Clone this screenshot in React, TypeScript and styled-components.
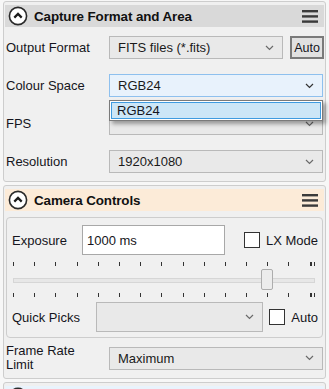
import styled, { createGlobalStyle } from 'styled-components';

const GlobalStyle = createGlobalStyle`
  html, body {
    margin: 0;
    padding: 0;
    background: #f7f7f7;
  }
  body {
    font-family: 'Liberation Sans', Arial, sans-serif;
    font-size: 13px;
    color: #151520;
  }
`;

const headerColors = {
  gray: '#d9d9d9',
  orange: '#fcebd8',
  blue: '#e9f3fc',
};

function CollapseIcon() {
  return (
    <svg width="20" height="20" viewBox="0 0 20 20">
      <circle cx="10" cy="10" r="8.6" fill="#fff" stroke="#2a2a2a" strokeWidth="1.6" />
      <path d="M6.3 11.6 L10 7.9 L13.7 11.6" fill="none" stroke="#1a1a1a" strokeWidth="2.2" />
    </svg>
  );
}

function MenuIcon() {
  return (
    <svg width="16" height="13" viewBox="0 0 16 13">
      <rect x="0" y="0" width="16" height="2.4" fill="#3a3a3a" />
      <rect x="0" y="5.2" width="16" height="2.4" fill="#3a3a3a" />
      <rect x="0" y="10.4" width="16" height="2.4" fill="#3a3a3a" />
    </svg>
  );
}

function Chevron() {
  return (
    <svg width="9" height="6" viewBox="0 0 9 6">
      <path d="M1 1 L4.5 4.5 L8 1" fill="none" stroke="#6a6a6a" strokeWidth="1.2" />
    </svg>
  );
}

function Combo({ value, width, height = 23, focused }: { value?: string; width: number; height?: number; focused?: boolean }) {
  return (
    <ComboBox $width={width} $height={height} $focused={focused}>
      <ComboText>{value}</ComboText>
      <Chevron />
    </ComboBox>
  );
}

const ticks = Array.from({ length: 15 }, (_, i) => i);

export default function App() {
  return (
    <>
      <GlobalStyle />
      <Page>
        <Panel>
          <Header $bg={headerColors.gray}>
            <CollapseIcon />
            <HeaderTitle>Capture Format and Area</HeaderTitle>
            <MenuIcon />
          </Header>
          <Rows>
            <Row>
              <Label>Output Format</Label>
              <Combo value="FITS files (*.fits)" width={174} />
              <AutoButton>Auto</AutoButton>
            </Row>
            <Row>
              <Label>Colour Space</Label>
              <DropWrap>
                <Combo value="RGB24" width={214} focused />
                <DropList>
                  <DropItem>RGB24</DropItem>
                </DropList>
              </DropWrap>
            </Row>
            <Row>
              <Label>FPS</Label>
              <Combo width={214} />
            </Row>
            <Row>
              <Label>Resolution</Label>
              <Combo value="1920x1080" width={214} />
            </Row>
          </Rows>
        </Panel>

        <Panel>
          <Header $bg={headerColors.orange}>
            <CollapseIcon />
            <HeaderTitle>Camera Controls</HeaderTitle>
            <MenuIcon />
          </Header>
          <GroupBox>
            <ExposureRow>
              <SmallLabel>Exposure</SmallLabel>
              <TextInput>1000 ms</TextInput>
              <CheckLabel>
                <CheckBox />
                LX Mode
              </CheckLabel>
            </ExposureRow>
            <Slider>
              <TickRow>
                {ticks.map(i => (
                  <Tick key={i} />
                ))}
                <DoubleTick />
              </TickRow>
              <TrackArea>
                <Track />
                <Thumb />
              </TrackArea>
              <TickRow>
                {ticks.map(i => (
                  <Tick key={i} />
                ))}
                <DoubleTick />
              </TickRow>
            </Slider>
            <QuickRow>
              <SmallLabel>Quick Picks</SmallLabel>
              <Combo width={167} height={30} />
              <CheckLabel>
                <CheckBox />
                Auto
              </CheckLabel>
            </QuickRow>
          </GroupBox>
          <FrameRow>
            <Label>
              Frame Rate
              <br />
              Limit
            </Label>
            <Combo value="Maximum" width={214} />
          </FrameRow>
        </Panel>

        <Panel>
          <Header $bg={headerColors.blue}>
            <CollapseIcon />
          </Header>
        </Panel>
      </Page>
    </>
  );
}

const Page = styled.div`
  width: 329px;
  height: 389px;
  overflow: hidden;
  padding: 1px 3px 0 3px;
  box-sizing: border-box;
  display: flex;
  flex-direction: column;
  gap: 3px;
`;

const Panel = styled.div`
  flex-shrink: 0;
  background: #f0f0f0;
  border: 1px solid #cdcdcd;
  border-radius: 3px;
  padding: 3px 1px 2px 1px;
`;

const Header = styled.div<{ $bg: string }>`
  height: 22px;
  background: ${({ $bg }) => $bg};
  display: flex;
  align-items: center;
  padding: 0 6px 0 3px;
  gap: 6px;
`;

const HeaderTitle = styled.div`
  flex: 1;
  font-weight: 700;
  font-size: 13.4px;
  letter-spacing: -0.1px;
  color: #111;
`;

const Rows = styled.div`
  display: flex;
  flex-direction: column;
  gap: 15px;
  padding: 9px 0 6px 1px;
`;

const Row = styled.div`
  display: flex;
  align-items: center;
  height: 23px;
`;

const Label = styled.div`
  width: 103px;
  flex-shrink: 0;
  line-height: 14px;
`;

const ComboBox = styled.div<{ $width: number; $height: number; $focused?: boolean }>`
  width: ${({ $width }) => $width}px;
  height: ${({ $height }) => $height}px;
  box-sizing: border-box;
  border: 1px solid ${({ $focused }) => ($focused ? '#8ec0ee' : '#b9b9b9')};
  background: ${({ $focused }) => ($focused ? '#e8f2fc' : '#e9e9e9')};
  display: flex;
  align-items: center;
  padding: 0 8px 0 8px;
  flex-shrink: 0;
  & svg path {
    stroke: ${({ $focused }) => ($focused ? '#333' : '#6a6a6a')};
  }
`;

const ComboText = styled.div`
  flex: 1;
  color: #1a1a1a;
`;

const AutoButton = styled.div`
  margin-left: 7px;
  width: 35px;
  height: 23px;
  box-sizing: border-box;
  border: 2px solid #7a7a7a;
  background: #e1e1e1;
  display: flex;
  align-items: center;
  justify-content: center;
  font-size: 12.5px;
`;

const DropWrap = styled.div`
  position: relative;
`;

const DropList = styled.div`
  position: absolute;
  top: 26px;
  left: 0;
  width: 214px;
  height: 21px;
  box-sizing: border-box;
  border: 1px solid #7a7a7a;
  background: #fff;
  padding: 1px;
  box-shadow: 3px 3px 4px rgba(0, 0, 0, 0.35);
  z-index: 2;
`;

const DropItem = styled.div`
  height: 100%;
  box-sizing: border-box;
  background: #cce6f7;
  border: 1px solid #3f9be0;
  display: flex;
  align-items: center;
  padding-left: 5px;
`;

const GroupBox = styled.div`
  margin: 6px 1px 0 1px;
  border: 1px solid #cdcdcd;
  border-radius: 4px;
  padding: 7px 4px 5px 5px;
  display: flex;
  flex-direction: column;
`;

const ExposureRow = styled.div`
  display: flex;
  align-items: center;
  height: 30px;
`;

const SmallLabel = styled.div`
  width: 70px;
  flex-shrink: 0;
`;

const TextInput = styled.div`
  width: 143px;
  height: 30px;
  box-sizing: border-box;
  background: #fff;
  border: 1px solid #a8a8a8;
  display: flex;
  align-items: center;
  padding-left: 4px;
`;

const CheckLabel = styled.div`
  margin-left: auto;
  display: flex;
  align-items: center;
  gap: 6px;
`;

const CheckBox = styled.div`
  width: 16px;
  height: 16px;
  box-sizing: border-box;
  background: #fff;
  border: 1px solid #333;
`;

const Slider = styled.div`
  margin-top: 7px;
  display: flex;
  flex-direction: column;
`;

const TickRow = styled.div`
  display: flex;
  justify-content: space-between;
  height: 5px;
  padding: 0 3px 0 1px;
`;

const Tick = styled.div`
  width: 1px;
  height: 4px;
  background: #333;
`;

const DoubleTick = styled.div`
  width: 4px;
  height: 4px;
  border-left: 1px solid #333;
  border-right: 1px solid #333;
  box-sizing: border-box;
  margin-left: -20px;
`;

const TrackArea = styled.div`
  position: relative;
  height: 26px;
  display: flex;
  align-items: center;
  padding: 0 3px 0 1px;
`;

const Track = styled.div`
  flex: 1;
  height: 3px;
  background: #e7e7e7;
  border: 1px solid #d6d6d6;
`;

const Thumb = styled.div`
  position: absolute;
  left: 249px;
  top: 2px;
  width: 12px;
  height: 21px;
  box-sizing: border-box;
  background: #ececec;
  border: 1px solid #adadad;
  border-radius: 2px;
`;

const QuickRow = styled.div`
  display: flex;
  align-items: center;
  margin-top: 4px;
  height: 30px;
  & > div:nth-child(2) {
    margin-left: 14px;
  }
`;

const FrameRow = styled.div`
  display: flex;
  align-items: center;
  height: 32px;
  padding: 4px 0 2px 1px;
`;
